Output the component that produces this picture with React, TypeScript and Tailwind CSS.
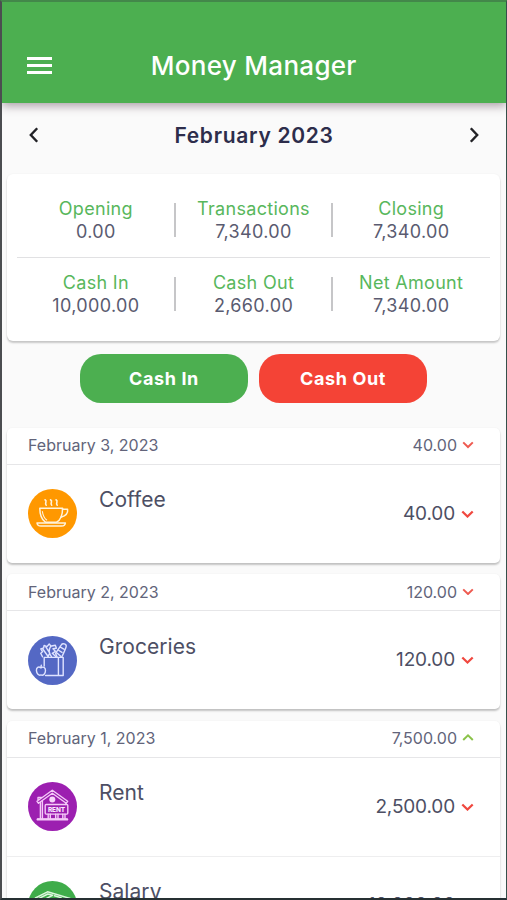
import React from 'react';

function Chevron({ dir, color, width, stroke }: { dir: 'up' | 'down' | 'left' | 'right'; color: string; width: number; stroke: number }) {
  const paths = {
    down: 'M1.2 1.4 L6 6 L10.8 1.4',
    up: 'M1.2 6 L6 1.4 L10.8 6',
    left: 'M8.2 1.2 L1.8 8 L8.2 14.8',
    right: 'M1.8 1.2 L8.2 8 L1.8 14.8',
  };
  const flat = dir === 'up' || dir === 'down';
  return (
    <svg
      width={width}
      height={flat ? (width * 7.4) / 12 : (width * 16) / 10}
      viewBox={flat ? '0 0 12 7.4' : '0 0 10 16'}
      fill="none"
      stroke={color}
      strokeWidth={stroke}
    >
      <path d={paths[dir]} />
    </svg>
  );
}

function CoffeeIcon() {
  return (
    <svg width="49" height="49" viewBox="0 0 49 49" fill="none" stroke="#fff3dc" strokeWidth="1.5" strokeLinecap="round" strokeLinejoin="round">
      <circle cx="24.5" cy="24.5" r="24.5" fill="#ff9800" stroke="none" />
      <path d="M17 10.8c3 1.7-1 3.2 1.2 5.4M22.5 10.8c3 1.7-1 3.2 1.2 5.4M28 10.8c3 1.7-1 3.2 1.2 5.4" strokeWidth="1.6" />
      <path d="M11.8 19.2H34.6C34.6 26.5 32.4 31 28.6 33.2H17.4C13.7 30.5 11.8 25.5 11.8 19.2Z" />
      <path d="M34.5 20.3H39.6C40.2 24 37 27 32.8 28.3" />
      <path d="M14.4 22.5C14.9 26.3 16.3 29.2 18.7 31" strokeWidth="1.1" />
      <path d="M9 34H37.4C37.2 36.2 35.7 37 33.5 37H13C10.7 37 9.2 36.2 9 34Z" />
    </svg>
  );
}

function GroceriesIcon() {
  return (
    <svg width="49" height="49" viewBox="0 0 49 49" fill="none" stroke="#dfe3ff" strokeWidth="1.4" strokeLinecap="round" strokeLinejoin="round">
      <circle cx="24.5" cy="24.5" r="24.5" fill="#5468c4" stroke="none" />
      <path d="M16.2 30V21.4H35.2V39.5H17.5M30.4 22V39.5" />
      <path d="M12.9 31.8C10.4 30.1 8.3 31.6 8.4 34.4C8.6 37.6 10.8 40 12.9 38.9C15.3 40 17.5 37.5 17.5 34.5C17.5 31.6 15.3 30.2 12.9 31.8ZM12.9 31.6L13.3 29.2" />
      <path d="M14.5 20.8L12.7 17.2L14.6 15.8L12.8 12.8L15.6 12L16.1 9.4L19 10.6L21.2 8L23.2 10.4M14.8 13L20.5 21M17.8 10.8L21.8 17.2L19.8 20.8M22.6 10.3C20.7 13.4 21 17.5 23.5 20.7M22.6 10.3L27.3 9.2L28.4 12.2L25 12.8L27.4 15.3L24.3 17.3L28 20.7" />
      <path d="M29 20.8L27.5 17.4L33.3 8.8C34.5 6.8 38.7 7.8 38.2 10.4C37.9 12.4 36.3 15.4 34 20.5M32 10.9L35.8 13.1M30.2 14L34 16.3M29 17L32.7 20.3" />
    </svg>
  );
}

function RentIcon() {
  return (
    <svg width="49" height="49" viewBox="0 0 49 49" fill="none" stroke="#f4c9f8" strokeWidth="1.4" strokeLinecap="round" strokeLinejoin="round">
      <circle cx="24.5" cy="24.5" r="24.5" fill="#9c1fb0" stroke="none" />
      <path d="M9 19.3L24.3 8.2L39.7 19.3L38.2 21.2L24.3 11.3L10.5 21.2ZM10 17.7V15.5H13.5" />
      <path d="M12.4 20.2V36.5M14.4 18.8V36.5M37.8 21.3V22.5" />
      <circle cx="24.3" cy="17.4" r="3" fill="#f7d5fb" stroke="none" />
      <rect x="17.2" y="22.5" width="22.6" height="9.6" rx="1" />
      <text x="28.5" y="29.8" textAnchor="middle" fill="#fbe6ff" stroke="none" fontFamily="Inter, sans-serif" fontSize="6.4" fontWeight="800" textLength="17">RENT</text>
      <path d="M20.2 32.2V36.4M22.3 32.2V36.4M27.7 32.2V36.4M30 32.2V36.4M34.8 32.2V36.4M37 32.2V36.4M9.5 37.2H39.2" />
      <path d="M9.8 37.4H39" strokeWidth="2.4" />
    </svg>
  );
}

function SalaryIcon() {
  return (
    <svg width="49" height="49" viewBox="0 0 49 49" fill="none" stroke="#dcf5dd" strokeWidth="1.5" strokeLinecap="round" strokeLinejoin="round">
      <circle cx="24.5" cy="24.5" r="24.5" fill="#3fac4a" stroke="none" />
      <path d="M7.5 17L19.5 10.8L42 17.4L28 24.5ZM11.5 17.2L19.8 13L24.5 14.3L18.5 17.4" />
      <path d="M26.5 14.8L33 16.7L27 19.8M7.5 17V22L28 30L42 22.5V17.4" />
    </svg>
  );
}

function Stat({ label, value }: { label: string; value: string }) {
  return (
    <div className="flex flex-1 flex-col items-center text-[18px] leading-[23px]">
      <span className="tracking-[0.3px] text-[#58b75c]">{label}</span>
      <span className="tracking-[0.35px] text-[#5a5b70]">{value}</span>
    </div>
  );
}

function StatRow({ items }: { items: [string, string][] }) {
  return (
    <div className="flex items-center">
      {items.map(([label, value], i) => (
        <React.Fragment key={label}>
          {i > 0 && <div className="-mx-px h-[34px] w-[2px] bg-[#c6c6c8]" />}
          <Stat label={label} value={value} />
        </React.Fragment>
      ))}
    </div>
  );
}

type Item = { name: string; amount: string; icon: React.ReactNode; up?: boolean };

function DayCard({ date, total, up, items }: { date: string; total: string; up?: boolean; items: Item[] }) {
  return (
    <section className="mb-[11.5px] shrink-0 rounded-[5px] bg-white shadow-[0_2px_2px_rgba(0,0,0,0.22),0_0_2px_rgba(0,0,0,0.05)]">
      <div className="flex h-[37px] items-center justify-between border-b border-[#e6e6e8] pl-[21px] pr-[26px] pb-px text-[16px] text-[#62647a]">
        <span>{date}</span>
        <span className="flex items-center gap-[5px]">
          {total}
          <Chevron dir={up ? 'up' : 'down'} color={up ? '#8bc34a' : '#ee5a50'} width={12} stroke={2} />
        </span>
      </div>
      {items.map((item, i) => (
        <div key={item.name} className={`flex h-[98px] items-center pl-[21px] pr-[26px] text-[#4d4f64] ${i > 0 ? 'border-t border-[#eeeeef]' : ''}`}>
          {item.icon}
          <span className="mb-[27px] ml-[22px] flex-1 text-[21px] leading-[26px] tracking-[0.05px]">{item.name}</span>
          <span className="flex items-center gap-[6px] pt-px text-[19px] tracking-[-0.15px]">
            {item.amount}
            <Chevron dir={item.up ? 'up' : 'down'} color={item.up ? '#8bc34a' : '#f0483f'} width={13} stroke={2.1} />
          </span>
        </div>
      ))}
    </section>
  );
}

export default function App() {
  return (
    <div className="flex h-[900px] w-[507px] flex-col overflow-hidden border-t-2 border-r border-b-2 border-l-2 border-t-[#43874a] border-r-[#35504a] border-b-[#263033] border-l-[#4b4d50] bg-[#fafafa] font-[Inter,'Liberation_Sans',sans-serif]">
      <header className="relative z-10 flex h-[101px] shrink-0 items-center bg-[#4caf50] pt-[26px] shadow-[0_3px_9px_rgba(60,30,50,0.42)]">
        <button className="ml-[24.5px] flex w-[25px] flex-col gap-[3.4px]" aria-label="Menu">
          <span className="h-[3.6px] bg-white" />
          <span className="h-[3.6px] bg-white" />
          <span className="h-[3.6px] bg-white" />
        </button>
        <h1 className="mr-[50px] flex-1 text-center text-[26px] font-medium tracking-[0.3px] text-white">Money Manager</h1>
      </header>

      <div className="flex h-[71px] shrink-0 items-start justify-between px-[27px] pt-[19px]">
        <div className="flex h-[26px] items-center">
          <Chevron dir="left" color="#222226" width={10} stroke={2.4} />
        </div>
        <h2 className="pt-px text-[21px] font-semibold leading-[26px] tracking-[0.7px] text-[#2d2d4b]">February 2023</h2>
        <div className="flex h-[26px] items-center">
          <Chevron dir="right" color="#222226" width={10} stroke={2.4} />
        </div>
      </div>

      <main className="flex min-h-0 flex-1 flex-col pl-[5px] pr-[6px]">
        <section className="h-[167px] shrink-0 rounded-[6px] bg-white px-[10px] pt-[23px] shadow-[0_2px_2px_rgba(0,0,0,0.2),0_0_2px_rgba(0,0,0,0.05)]">
          <StatRow items={[['Opening', '0.00'], ['Transactions', '7,340.00'], ['Closing', '7,340.00']]} />
          <div className="mt-[14px] mb-[13px] h-px bg-[#e1e1e3]" />
          <StatRow items={[['Cash In', '10,000.00'], ['Cash Out', '2,660.00'], ['Net Amount', '7,340.00']]} />
        </section>

        <div className="mt-[13px] mb-[24.5px] flex shrink-0 justify-center gap-[11px] text-[18px] font-bold tracking-[0.6px] text-white">
          <button className="h-[49px] w-[168px] rounded-[21px] bg-[#4caf50] pb-px">Cash In</button>
          <button className="h-[49px] w-[168px] rounded-[21px] bg-[#f44336] pb-px">Cash Out</button>
        </div>

        <DayCard date="February 3, 2023" total="40.00" items={[{ name: 'Coffee', amount: '40.00', icon: <CoffeeIcon /> }]} />
        <DayCard date="February 2, 2023" total="120.00" items={[{ name: 'Groceries', amount: '120.00', icon: <GroceriesIcon /> }]} />
        <DayCard
          date="February 1, 2023"
          total="7,500.00"
          up
          items={[
            { name: 'Rent', amount: '2,500.00', icon: <RentIcon /> },
            { name: 'Salary', amount: '10,000.00', icon: <SalaryIcon />, up: true },
          ]}
        />
      </main>
    </div>
  );
}
